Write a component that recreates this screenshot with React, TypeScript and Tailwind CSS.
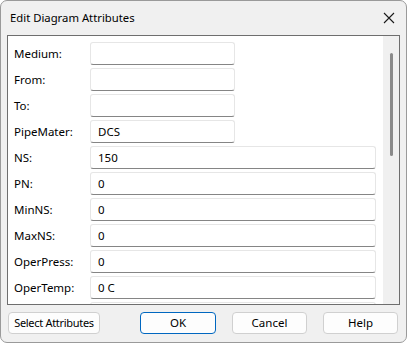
import React from "react";

const rows: { label: string; value: string; short?: boolean }[] = [
  { label: "Medium:", value: "", short: true },
  { label: "From:", value: "", short: true },
  { label: "To:", value: "", short: true },
  { label: "PipeMater:", value: "DCS", short: true },
  { label: "NS:", value: "150" },
  { label: "PN:", value: "0" },
  { label: "MinNS:", value: "0" },
  { label: "MaxNS:", value: "0" },
  { label: "OperPress:", value: "0" },
  { label: "OperTemp:", value: "0 C" },
  { label: "DesPress:", value: "0" },
];

export default function App() {
  return (
    <div
      className="w-[407px] h-[343px] bg-[#f0f0f0] border border-[#9a9a9a] rounded-[7px] flex flex-col overflow-hidden text-[11.5px] text-black"
      style={{ fontFamily: '"Noto Sans", "Segoe UI", sans-serif' }}
    >
      <div className="h-[34px] shrink-0 flex items-center justify-between pl-[9px] pr-[8px]">
        <span className="text-[11.3px]">Edit Diagram Attributes</span>
        <svg width="12" height="12" viewBox="0 0 12 12" className="mr-[3px]">
          <path d="M1 1 L11 11 M11 1 L1 11" stroke="#1a1a1a" strokeWidth="1.1" />
        </svg>
      </div>
      <div className="ml-[6px] mr-[6px] h-[270px] shrink-0 border border-[#6e6e6e] flex overflow-hidden">
        <div className="flex-1 bg-white pt-[6px] pl-[6px] pr-[7px] flex flex-col gap-[3px] overflow-hidden">
          {rows.map((r) => (
            <div key={r.label} className="flex items-center h-[23px] shrink-0">
              <span className="w-[76px] shrink-0 whitespace-nowrap">{r.label}</span>
              <div
                className={`h-[23px] ${r.short ? "w-[145px]" : "flex-1"} border border-[#e6e6e6] border-b-[#858585] rounded-[3px] bg-white flex items-center pl-[7px]`}
              >
                {r.value}
              </div>
            </div>
          ))}
        </div>
        <div className="w-[16px] shrink-0 bg-[#f0f0f0] flex justify-center pt-[17px] pl-[1px]">
          <div className="w-[3px] h-[103px] rounded-full bg-[#8a8a8a]" />
        </div>
      </div>
      <div className="flex items-center mt-[7px] pl-[7px]">
        <button className="w-[92px] h-[22px] px-0 rounded-[4px] border border-[#d0d0d0] bg-[#fdfdfd] text-[11px] whitespace-nowrap tracking-[-0.3px] flex items-center justify-center">
          Select Attributes
        </button>
        <button className="ml-[40px] w-[76px] h-[22px] rounded-[4px] border border-[#0067c0] bg-[#fdfdfd] text-[11.5px]">
          OK
        </button>
        <button className="ml-[16px] w-[75px] h-[22px] rounded-[4px] border border-[#d0d0d0] bg-[#fdfdfd] text-[11.5px]">
          Cancel
        </button>
        <button className="ml-[16px] w-[75px] h-[22px] rounded-[4px] border border-[#d0d0d0] bg-[#fdfdfd] text-[11.5px]">
          Help
        </button>
      </div>
    </div>
  );
}
